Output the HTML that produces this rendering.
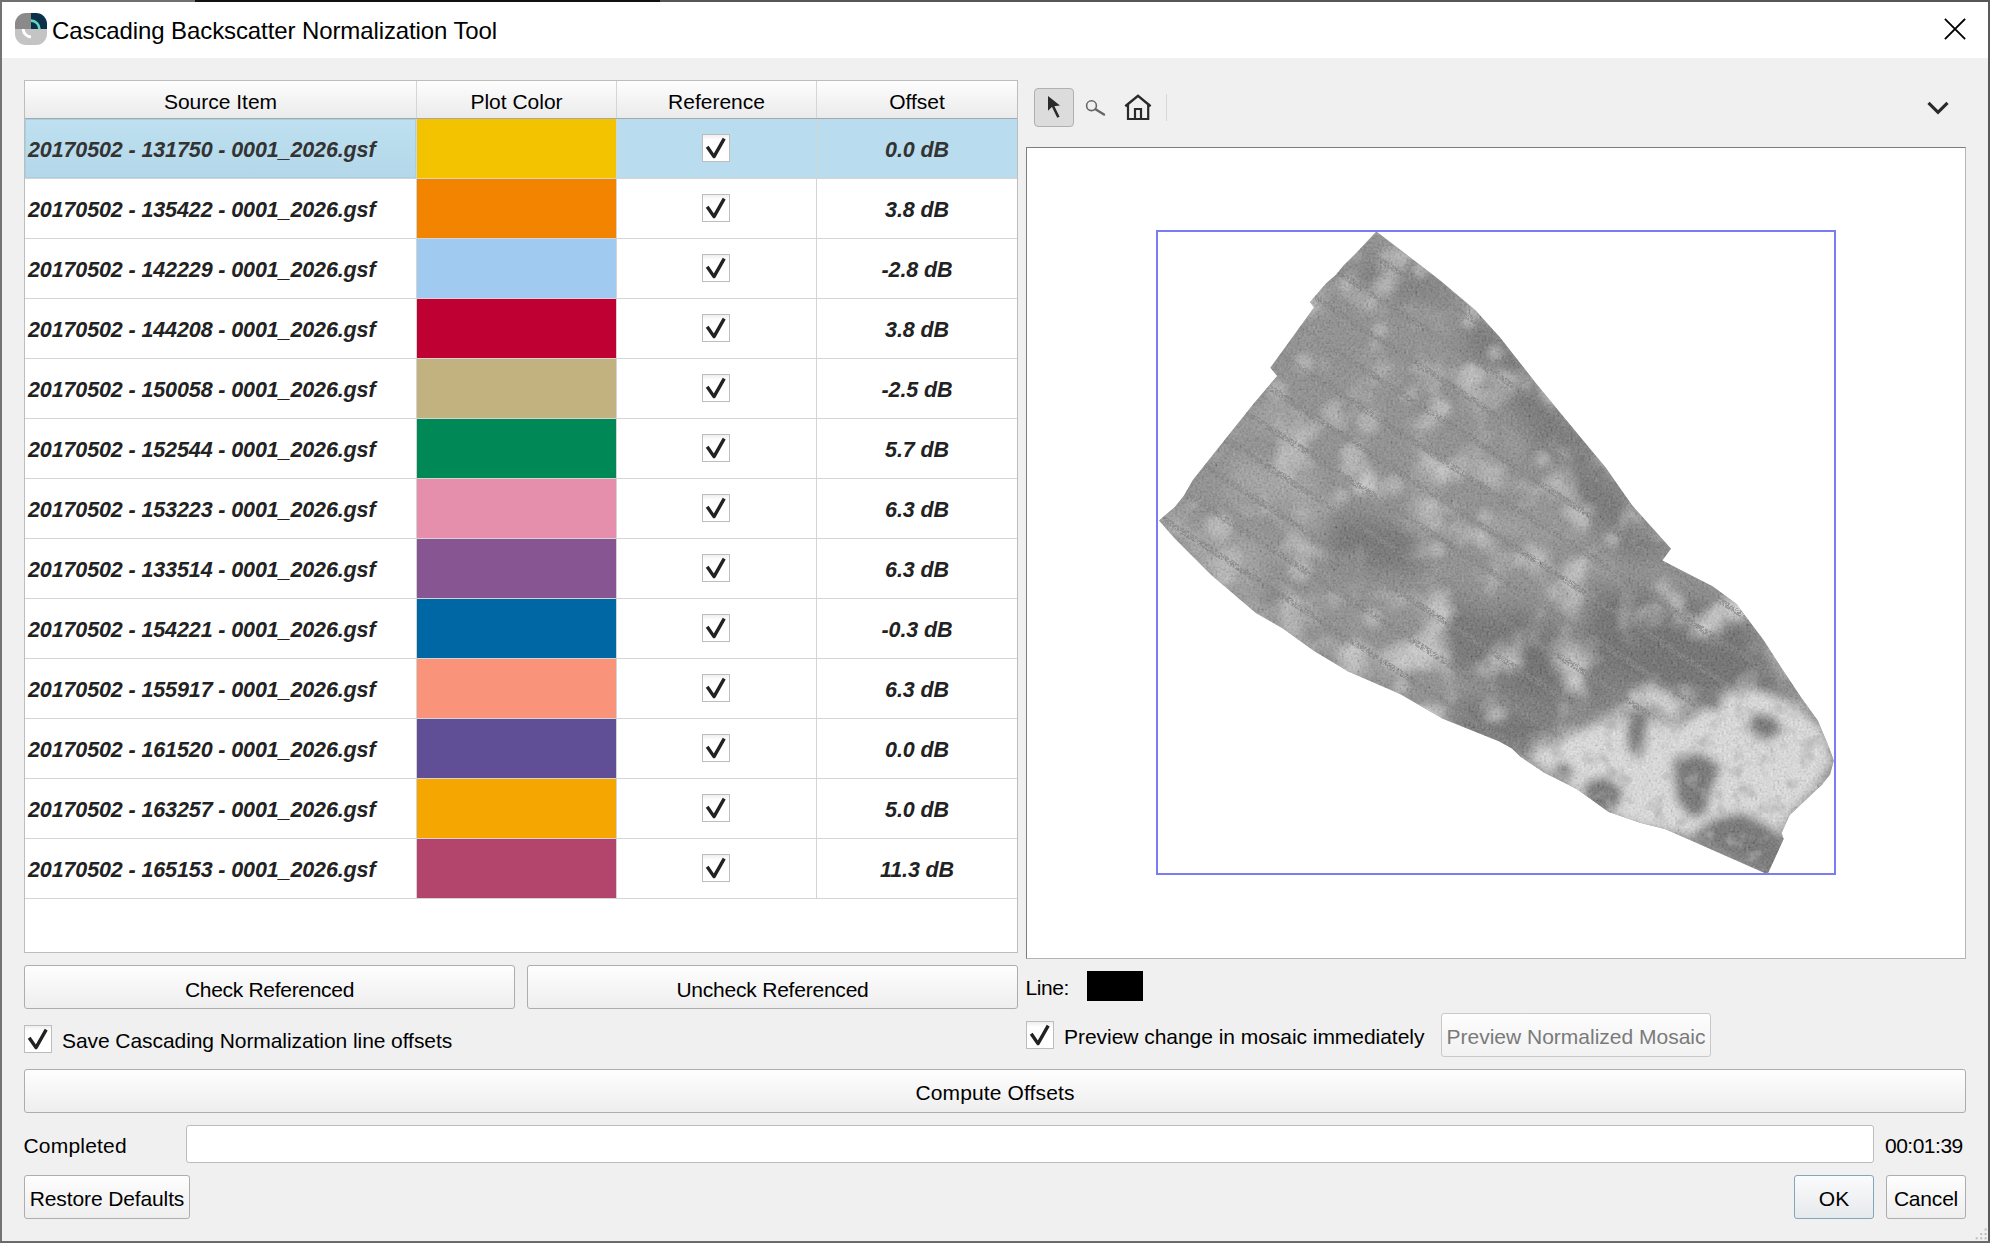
<!DOCTYPE html>
<html><head><meta charset="utf-8"><title>Cascading Backscatter Normalization Tool</title>
<style>
*{box-sizing:border-box;margin:0;padding:0}
html,body{width:1990px;height:1243px;overflow:hidden;background:#f0f0f0;font-family:"Liberation Sans",sans-serif;color:#000;position:relative}
.a{position:absolute}
.tt{font-size:24px;line-height:24px;white-space:nowrap;color:#000}
.txt{font-size:21px;line-height:21px;white-space:nowrap;color:#000}
.ht{font-size:21px;line-height:21px;white-space:nowrap;text-align:center;color:#000}
.rt{font-size:21.5px;letter-spacing:-0.12px;line-height:21px;white-space:nowrap;font-weight:bold;font-style:italic}
.ctr{text-align:center}
.hdr{background:linear-gradient(#fdfdfd,#ebebeb)}
.btn{border:1px solid #adadad;border-radius:3px;background:linear-gradient(#fefefe,#eeeeee)}
.btnd{border:1px solid #c9c9c9;border-radius:3px;background:linear-gradient(#fdfdfd,#f1f1f1)}
.cb{position:absolute;width:28px;height:28px;border:1px solid #bdbdbd;background:linear-gradient(#eeeeee,#fff 5px)}
.cb svg{position:absolute;left:-1px;top:-1px}

</style></head><body>
<div class="a" style="left:0;top:0;width:1990px;height:2px;background:#575757"></div>
<div class="a" style="left:0;top:0;width:195px;height:2px;background:#707070"></div>
<div class="a" style="left:195px;top:0;width:465px;height:2px;background:#111"></div>
<div class="a" style="left:0;top:0;width:2px;height:1243px;background:#737373"></div>
<div class="a" style="left:1988px;top:0;width:2px;height:1243px;background:#5a5a5a"></div>
<div class="a" style="left:0;top:1241px;width:1990px;height:2px;background:#6a6a6a"></div>
<div class="a" style="left:2px;top:2px;width:1986px;height:56px;background:#fff"></div>
<div class="a" style="left:15px;top:13px;width:32px;height:32px">
<svg width="32" height="32" viewBox="0 0 32 32">
<defs><clipPath id="ic"><rect x="0" y="0" width="32" height="32" rx="11" ry="11"/></clipPath></defs>
<g clip-path="url(#ic)">
<rect x="0" y="0" width="16" height="16" fill="#8a8a8a"/>
<rect x="16" y="0" width="16" height="16" fill="#0b3049"/>
<rect x="0" y="16" width="32" height="16" fill="#c4c4c4"/>
<path d="M16 7.6 A8.4 8.4 0 0 1 24.4 16" fill="none" stroke="#62d8bd" stroke-width="2.6"/>
<path d="M8.2 16 A7.8 7.8 0 0 0 16 23.8" fill="none" stroke="#fff" stroke-width="2.8"/>
</g></svg></div>
<div class="a tt" style="left:52px;top:19px;letter-spacing:-0.1px">Cascading Backscatter Normalization Tool</div>
<svg class="a" style="left:1940px;top:14px" width="30" height="30" viewBox="0 0 30 30"><path d="M5.6 5.6 L24.4 24.4 M24.4 5.6 L5.6 24.4" stroke="#000" stroke-width="1.9" stroke-linecap="square"/></svg>

<!-- table -->
<div class="a" style="left:24px;top:80px;width:994px;height:873px;border:1px solid #bdbdbd;background:#fff"></div>
<div class="a hdr" style="left:25px;top:81px;width:992px;height:37px"></div>
<div class="a" style="left:25px;top:118px;width:992px;height:1px;background:#a8a8a8"></div>
<div class="a" style="left:416px;top:81px;width:1px;height:37px;background:#d5d5d5"></div>
<div class="a" style="left:616px;top:81px;width:1px;height:37px;background:#d5d5d5"></div>
<div class="a" style="left:816px;top:81px;width:1px;height:37px;background:#d5d5d5"></div>
<div class="a ht" style="left:25px;width:391px;top:91px">Source Item</div>
<div class="a ht" style="left:417px;width:199px;top:91px">Plot Color</div>
<div class="a ht" style="left:617px;width:199px;top:91px">Reference</div>
<div class="a ht" style="left:817px;width:200px;top:91px">Offset</div>
<div class="a" style="left:25px;top:119px;width:391px;height:59px;background:linear-gradient(#bee0f1,#b4d8e9);border:1px solid #a9cfe2"></div><div class="a" style="left:417px;top:119px;width:199px;height:59px;background:#F3C300"></div><div class="a" style="left:617px;top:119px;width:400px;height:59px;background:#b9dcee"></div><div class="a rt" style="left:28px;top:140px;color:#333">20170502 - 131750 - 0001_2026.gsf</div><div class="a rt ctr" style="left:817px;width:200px;top:140px;color:#333">0.0 dB</div><div class="cb" style="left:702px;top:134px"><svg width="28" height="28" viewBox="0 0 28 28"><path d="M5.2 12.8 L12 22.6 L22.2 4.6" fill="none" stroke="#222" stroke-width="3.4" stroke-linejoin="round"/></svg></div><div class="a" style="left:25px;top:178px;width:992px;height:1px;background:#d4d4d4"></div><div class="a" style="left:25px;top:179px;width:391px;height:59px;background:#ffffff"></div><div class="a" style="left:417px;top:179px;width:199px;height:59px;background:#F38400"></div><div class="a" style="left:617px;top:179px;width:400px;height:59px;background:#ffffff"></div><div class="a rt" style="left:28px;top:200px;color:#222">20170502 - 135422 - 0001_2026.gsf</div><div class="a rt ctr" style="left:817px;width:200px;top:200px;color:#222">3.8 dB</div><div class="cb" style="left:702px;top:194px"><svg width="28" height="28" viewBox="0 0 28 28"><path d="M5.2 12.8 L12 22.6 L22.2 4.6" fill="none" stroke="#222" stroke-width="3.4" stroke-linejoin="round"/></svg></div><div class="a" style="left:25px;top:238px;width:992px;height:1px;background:#d4d4d4"></div><div class="a" style="left:25px;top:239px;width:391px;height:59px;background:#ffffff"></div><div class="a" style="left:417px;top:239px;width:199px;height:59px;background:#A1CAF1"></div><div class="a" style="left:617px;top:239px;width:400px;height:59px;background:#ffffff"></div><div class="a rt" style="left:28px;top:260px;color:#222">20170502 - 142229 - 0001_2026.gsf</div><div class="a rt ctr" style="left:817px;width:200px;top:260px;color:#222">-2.8 dB</div><div class="cb" style="left:702px;top:254px"><svg width="28" height="28" viewBox="0 0 28 28"><path d="M5.2 12.8 L12 22.6 L22.2 4.6" fill="none" stroke="#222" stroke-width="3.4" stroke-linejoin="round"/></svg></div><div class="a" style="left:25px;top:298px;width:992px;height:1px;background:#d4d4d4"></div><div class="a" style="left:25px;top:299px;width:391px;height:59px;background:#ffffff"></div><div class="a" style="left:417px;top:299px;width:199px;height:59px;background:#BE0032"></div><div class="a" style="left:617px;top:299px;width:400px;height:59px;background:#ffffff"></div><div class="a rt" style="left:28px;top:320px;color:#222">20170502 - 144208 - 0001_2026.gsf</div><div class="a rt ctr" style="left:817px;width:200px;top:320px;color:#222">3.8 dB</div><div class="cb" style="left:702px;top:314px"><svg width="28" height="28" viewBox="0 0 28 28"><path d="M5.2 12.8 L12 22.6 L22.2 4.6" fill="none" stroke="#222" stroke-width="3.4" stroke-linejoin="round"/></svg></div><div class="a" style="left:25px;top:358px;width:992px;height:1px;background:#d4d4d4"></div><div class="a" style="left:25px;top:359px;width:391px;height:59px;background:#ffffff"></div><div class="a" style="left:417px;top:359px;width:199px;height:59px;background:#C2B280"></div><div class="a" style="left:617px;top:359px;width:400px;height:59px;background:#ffffff"></div><div class="a rt" style="left:28px;top:380px;color:#222">20170502 - 150058 - 0001_2026.gsf</div><div class="a rt ctr" style="left:817px;width:200px;top:380px;color:#222">-2.5 dB</div><div class="cb" style="left:702px;top:374px"><svg width="28" height="28" viewBox="0 0 28 28"><path d="M5.2 12.8 L12 22.6 L22.2 4.6" fill="none" stroke="#222" stroke-width="3.4" stroke-linejoin="round"/></svg></div><div class="a" style="left:25px;top:418px;width:992px;height:1px;background:#d4d4d4"></div><div class="a" style="left:25px;top:419px;width:391px;height:59px;background:#ffffff"></div><div class="a" style="left:417px;top:419px;width:199px;height:59px;background:#008856"></div><div class="a" style="left:617px;top:419px;width:400px;height:59px;background:#ffffff"></div><div class="a rt" style="left:28px;top:440px;color:#222">20170502 - 152544 - 0001_2026.gsf</div><div class="a rt ctr" style="left:817px;width:200px;top:440px;color:#222">5.7 dB</div><div class="cb" style="left:702px;top:434px"><svg width="28" height="28" viewBox="0 0 28 28"><path d="M5.2 12.8 L12 22.6 L22.2 4.6" fill="none" stroke="#222" stroke-width="3.4" stroke-linejoin="round"/></svg></div><div class="a" style="left:25px;top:478px;width:992px;height:1px;background:#d4d4d4"></div><div class="a" style="left:25px;top:479px;width:391px;height:59px;background:#ffffff"></div><div class="a" style="left:417px;top:479px;width:199px;height:59px;background:#E68FAC"></div><div class="a" style="left:617px;top:479px;width:400px;height:59px;background:#ffffff"></div><div class="a rt" style="left:28px;top:500px;color:#222">20170502 - 153223 - 0001_2026.gsf</div><div class="a rt ctr" style="left:817px;width:200px;top:500px;color:#222">6.3 dB</div><div class="cb" style="left:702px;top:494px"><svg width="28" height="28" viewBox="0 0 28 28"><path d="M5.2 12.8 L12 22.6 L22.2 4.6" fill="none" stroke="#222" stroke-width="3.4" stroke-linejoin="round"/></svg></div><div class="a" style="left:25px;top:538px;width:992px;height:1px;background:#d4d4d4"></div><div class="a" style="left:25px;top:539px;width:391px;height:59px;background:#ffffff"></div><div class="a" style="left:417px;top:539px;width:199px;height:59px;background:#875692"></div><div class="a" style="left:617px;top:539px;width:400px;height:59px;background:#ffffff"></div><div class="a rt" style="left:28px;top:560px;color:#222">20170502 - 133514 - 0001_2026.gsf</div><div class="a rt ctr" style="left:817px;width:200px;top:560px;color:#222">6.3 dB</div><div class="cb" style="left:702px;top:554px"><svg width="28" height="28" viewBox="0 0 28 28"><path d="M5.2 12.8 L12 22.6 L22.2 4.6" fill="none" stroke="#222" stroke-width="3.4" stroke-linejoin="round"/></svg></div><div class="a" style="left:25px;top:598px;width:992px;height:1px;background:#d4d4d4"></div><div class="a" style="left:25px;top:599px;width:391px;height:59px;background:#ffffff"></div><div class="a" style="left:417px;top:599px;width:199px;height:59px;background:#0067A5"></div><div class="a" style="left:617px;top:599px;width:400px;height:59px;background:#ffffff"></div><div class="a rt" style="left:28px;top:620px;color:#222">20170502 - 154221 - 0001_2026.gsf</div><div class="a rt ctr" style="left:817px;width:200px;top:620px;color:#222">-0.3 dB</div><div class="cb" style="left:702px;top:614px"><svg width="28" height="28" viewBox="0 0 28 28"><path d="M5.2 12.8 L12 22.6 L22.2 4.6" fill="none" stroke="#222" stroke-width="3.4" stroke-linejoin="round"/></svg></div><div class="a" style="left:25px;top:658px;width:992px;height:1px;background:#d4d4d4"></div><div class="a" style="left:25px;top:659px;width:391px;height:59px;background:#ffffff"></div><div class="a" style="left:417px;top:659px;width:199px;height:59px;background:#F99379"></div><div class="a" style="left:617px;top:659px;width:400px;height:59px;background:#ffffff"></div><div class="a rt" style="left:28px;top:680px;color:#222">20170502 - 155917 - 0001_2026.gsf</div><div class="a rt ctr" style="left:817px;width:200px;top:680px;color:#222">6.3 dB</div><div class="cb" style="left:702px;top:674px"><svg width="28" height="28" viewBox="0 0 28 28"><path d="M5.2 12.8 L12 22.6 L22.2 4.6" fill="none" stroke="#222" stroke-width="3.4" stroke-linejoin="round"/></svg></div><div class="a" style="left:25px;top:718px;width:992px;height:1px;background:#d4d4d4"></div><div class="a" style="left:25px;top:719px;width:391px;height:59px;background:#ffffff"></div><div class="a" style="left:417px;top:719px;width:199px;height:59px;background:#604E97"></div><div class="a" style="left:617px;top:719px;width:400px;height:59px;background:#ffffff"></div><div class="a rt" style="left:28px;top:740px;color:#222">20170502 - 161520 - 0001_2026.gsf</div><div class="a rt ctr" style="left:817px;width:200px;top:740px;color:#222">0.0 dB</div><div class="cb" style="left:702px;top:734px"><svg width="28" height="28" viewBox="0 0 28 28"><path d="M5.2 12.8 L12 22.6 L22.2 4.6" fill="none" stroke="#222" stroke-width="3.4" stroke-linejoin="round"/></svg></div><div class="a" style="left:25px;top:778px;width:992px;height:1px;background:#d4d4d4"></div><div class="a" style="left:25px;top:779px;width:391px;height:59px;background:#ffffff"></div><div class="a" style="left:417px;top:779px;width:199px;height:59px;background:#F6A600"></div><div class="a" style="left:617px;top:779px;width:400px;height:59px;background:#ffffff"></div><div class="a rt" style="left:28px;top:800px;color:#222">20170502 - 163257 - 0001_2026.gsf</div><div class="a rt ctr" style="left:817px;width:200px;top:800px;color:#222">5.0 dB</div><div class="cb" style="left:702px;top:794px"><svg width="28" height="28" viewBox="0 0 28 28"><path d="M5.2 12.8 L12 22.6 L22.2 4.6" fill="none" stroke="#222" stroke-width="3.4" stroke-linejoin="round"/></svg></div><div class="a" style="left:25px;top:838px;width:992px;height:1px;background:#d4d4d4"></div><div class="a" style="left:25px;top:839px;width:391px;height:59px;background:#ffffff"></div><div class="a" style="left:417px;top:839px;width:199px;height:59px;background:#B3446C"></div><div class="a" style="left:617px;top:839px;width:400px;height:59px;background:#ffffff"></div><div class="a rt" style="left:28px;top:860px;color:#222">20170502 - 165153 - 0001_2026.gsf</div><div class="a rt ctr" style="left:817px;width:200px;top:860px;color:#222">11.3 dB</div><div class="cb" style="left:702px;top:854px"><svg width="28" height="28" viewBox="0 0 28 28"><path d="M5.2 12.8 L12 22.6 L22.2 4.6" fill="none" stroke="#222" stroke-width="3.4" stroke-linejoin="round"/></svg></div><div class="a" style="left:25px;top:898px;width:992px;height:1px;background:#d4d4d4"></div>
<div class="a" style="left:416px;top:119px;width:1px;height:780px;background:#d4d4d4"></div>
<div class="a" style="left:616px;top:119px;width:1px;height:780px;background:#d4d4d4"></div>
<div class="a" style="left:816px;top:119px;width:1px;height:780px;background:#d4d4d4"></div>

<!-- buttons under table -->
<div class="a btn" style="left:24px;top:965px;width:491px;height:44px"></div>
<div class="a txt ctr" style="left:24px;width:491px;top:979px;letter-spacing:-0.3px">Check Referenced</div>
<div class="a btn" style="left:527px;top:965px;width:491px;height:44px"></div>
<div class="a txt ctr" style="left:527px;width:491px;top:979px;letter-spacing:-0.22px">Uncheck Referenced</div>
<div class="cb" style="left:24px;top:1025px"><svg width="28" height="28" viewBox="0 0 28 28"><path d="M5.2 12.8 L12 22.6 L22.2 4.6" fill="none" stroke="#222" stroke-width="3.4" stroke-linejoin="round"/></svg></div>
<div class="a txt" style="left:62px;top:1030px;letter-spacing:-0.07px">Save Cascading Normalization line offsets</div>

<!-- right panel -->
<div class="a" style="left:1034px;top:88px;width:40px;height:39px;background:#dcdcdc;border:1px solid #b0b0b0;border-radius:4px"></div>
<svg class="a" style="left:1030px;top:84px" width="150" height="48" viewBox="1030 84 150 48">
<path d="M1048 96 L1048 110.8 L1052.4 106.6 L1055.8 105.9 L1060 105.6 Z" fill="#2a2a2a"/>
<path d="M1052.8 105.8 L1058.4 117.2" stroke="#2a2a2a" stroke-width="2.6"/>
<circle cx="1091.5" cy="105.7" r="4.9" fill="none" stroke="#666" stroke-width="1.6"/>
<path d="M1095.5 109.2 L1104 114.5" stroke="#666" stroke-width="2.4" stroke-linecap="round"/>
<path d="M1125.3 106.2 L1138 95.8 L1150.6 106.2" fill="none" stroke="#2a2a2a" stroke-width="2.4"/>
<path d="M1128 103.5 L1128 119 L1148.2 119 L1148.2 103.5 M1135 119 L1135 109 L1141 109 L1141 119" fill="none" stroke="#2a2a2a" stroke-width="2.2"/>
<rect x="1166" y="94" width="1" height="27" fill="#d8d8d8"/>
</svg>
<svg class="a" style="left:1920px;top:96px" width="36" height="24" viewBox="1920 96 36 24"><path d="M1928.5 102.8 L1938 112.3 L1947.5 102.8" fill="none" stroke="#2a2a2a" stroke-width="3.2"/></svg>

<div class="a" style="left:1026px;top:147px;width:940px;height:812px;background:#fff;border-top:1px solid #7d7d7d;border-left:1px solid #7d7d7d;border-right:1px solid #b4b4b4;border-bottom:1px solid #b4b4b4"></div>
<svg class="a" style="left:0;top:0" width="1990" height="1243" viewBox="0 0 1990 1243">
<defs>
<clipPath id="mc"><polygon points="1376.4,231.5 1439.9,280.2 1475.4,310.2 1500,337.6 1536.3,383.7 1562.4,415.6 1605.8,467.7 1632,505.3 1671,548.8 1662.3,560.4 1713,586.4 1736.2,603.8 1763.5,640 1781.6,668.2 1801.7,698.3 1817.8,720.4 1827.9,744.6 1833.9,760.7 1830,774.7 1821.9,784.8 1789.7,815 1781.6,833 1783.6,839 1767.5,874.3 1665,829 1640.9,823 1608.7,812 1576.5,788.8 1544.3,772.7 1520.2,756.6 1512,748.6 1499,741.3 1442.8,718.7 1400,694 1348.2,671.4 1314.4,651.2 1282.9,628.6 1255.9,612.9 1240,599.4 1210.8,574.6 1192.8,556.6 1174.8,538.6 1159,520.5 1174.8,507 1183.8,495.8 1192.8,480 1254,403.2 1277.2,375.9 1270.3,367.7 1314,307.5 1310,302 1326.4,282.9 1336,274.7 1344,265 1355,254.2"/></clipPath>
<filter id="bl" x="-30%" y="-30%" width="160%" height="160%"><feGaussianBlur stdDeviation="10"/></filter>
<filter id="bl2" x="-30%" y="-30%" width="160%" height="160%"><feGaussianBlur stdDeviation="3"/></filter>
<filter id="cl" x="0" y="0" width="100%" height="100%"><feTurbulence type="fractalNoise" baseFrequency="0.022" numOctaves="3" seed="11"/><feColorMatrix type="matrix" values="0 0 0 0 0.74 0 0 0 0 0.74 0 0 0 0 0.74 1.3 1.3 1.3 0 -1.95"/><feGaussianBlur stdDeviation="2"/></filter>
<filter id="dk" x="0" y="0" width="100%" height="100%"><feTurbulence type="fractalNoise" baseFrequency="0.02" numOctaves="2" seed="29"/><feColorMatrix type="matrix" values="0 0 0 0 0.38 0 0 0 0 0.38 0 0 0 0 0.38 -1.8 -1.8 -1.8 0 2.55"/></filter>
<filter id="nz" x="0" y="0" width="100%" height="100%"><feTurbulence type="fractalNoise" baseFrequency="0.45" numOctaves="1" seed="5"/><feColorMatrix type="matrix" values="0.33 0.33 0.33 0 0 0.33 0.33 0.33 0 0 0.33 0.33 0.33 0 0 0 0 0 0 1"/><feComponentTransfer><feFuncR type="linear" slope="2.4" intercept="-0.7"/><feFuncG type="linear" slope="2.4" intercept="-0.7"/><feFuncB type="linear" slope="2.4" intercept="-0.7"/></feComponentTransfer></filter>
<filter id="bl3" x="-30%" y="-30%" width="160%" height="160%"><feGaussianBlur stdDeviation="5"/></filter>
</defs>
<rect x="1157" y="231" width="678" height="643" fill="none" stroke="#7b7bf3" stroke-width="2"/>
<g clip-path="url(#mc)">
<rect x="1150" y="225" width="690" height="655" fill="#888888"/>
<rect x="1150" y="225" width="690" height="655" filter="url(#dk)" opacity="0.6"/>
<g filter="url(#bl)">
<polygon points="1475,308 1547.5,390.6 1669.5,549 1633,562 1580,509 1514.5,417 1462,338" fill="#555" opacity="0.55"/>
<polygon points="1350,259 1420,262 1462,305 1400,300 1340,290" fill="#555" opacity="0.35"/>
<polygon points="1330,510 1420,530 1420,575 1330,565" fill="#555" opacity="0.6"/>
<polygon points="1429,595 1540,625 1560,690 1520,705 1425,650" fill="#555" opacity="0.6"/>
<polygon points="1462,690 1560,725 1545,765 1455,730" fill="#555" opacity="0.65"/>
<polygon points="1600,585 1700,600 1745,620 1790,690 1750,700 1640,690 1580,640" fill="#555" opacity="0.7"/>
<polygon points="1500,600 1600,640 1640,710 1540,720" fill="#555" opacity="0.5"/>
<polygon points="1250,560 1290,600 1320,640 1260,610" fill="#555" opacity="0.3"/>
<polygon points="1231,457 1317,470 1317,509 1231,500" fill="#bbb" opacity="0.45"/>
<polygon points="1185,523 1264,540 1264,602 1200,580" fill="#bbb" opacity="0.4"/>
</g>
<rect x="1150" y="225" width="690" height="655" filter="url(#cl)" opacity="1"/>
<g filter="url(#bl2)">
<circle cx="1304" cy="363" r="10" fill="#b8b8b8" opacity="0.75"/>
<circle cx="1277" cy="390" r="10" fill="#b8b8b8" opacity="0.75"/>
<circle cx="1368" cy="422" r="12" fill="#b8b8b8" opacity="0.75"/>
<circle cx="1352" cy="454" r="12" fill="#b8b8b8" opacity="0.75"/>
<circle cx="1469" cy="374" r="10" fill="#b8b8b8" opacity="0.75"/>
<circle cx="1469" cy="321" r="8" fill="#b8b8b8" opacity="0.75"/>
<circle cx="1495" cy="353" r="8" fill="#b8b8b8" opacity="0.75"/>
<circle cx="1426" cy="422" r="8" fill="#b8b8b8" opacity="0.75"/>
<circle cx="1394" cy="485" r="10" fill="#b8b8b8" opacity="0.75"/>
<circle cx="1341" cy="496" r="8" fill="#b8b8b8" opacity="0.75"/>
<circle cx="1485" cy="517" r="8" fill="#b8b8b8" opacity="0.75"/>
<circle cx="1437" cy="549" r="8" fill="#b8b8b8" opacity="0.75"/>
<circle cx="1543" cy="459" r="8" fill="#b8b8b8" opacity="0.75"/>
<circle cx="1612" cy="539" r="8" fill="#b8b8b8" opacity="0.75"/>
<circle cx="1554" cy="592" r="8" fill="#b8b8b8" opacity="0.75"/>
<circle cx="1219" cy="528" r="12" fill="#b8b8b8" opacity="0.75"/>
<circle cx="1437" cy="597" r="8" fill="#b8b8b8" opacity="0.75"/>
<circle cx="1676" cy="602" r="8" fill="#b8b8b8" opacity="0.75"/>
<circle cx="1373" cy="618" r="10" fill="#b8b8b8" opacity="0.75"/>
<circle cx="1400" cy="687" r="8" fill="#b8b8b8" opacity="0.75"/>
<circle cx="1300" cy="570" r="12" fill="#b8b8b8" opacity="0.75"/>
<circle cx="1230" cy="560" r="12" fill="#b8b8b8" opacity="0.75"/>
<circle cx="1380" cy="330" r="8" fill="#b8b8b8" opacity="0.75"/>
<circle cx="1420" cy="270" r="8" fill="#b8b8b8" opacity="0.75"/>
<circle cx="1520" cy="560" r="8" fill="#b8b8b8" opacity="0.75"/>
</g>
<mask id="sm" maskUnits="userSpaceOnUse" x="1150" y="225" width="690" height="655"><path d="M1150 -170.0 L1850 285.0 M1150 -130.0 L1850 325.0 M1150 -90.0 L1850 365.0 M1150 -50.0 L1850 405.0 M1150 -10.0 L1850 445.0 M1150 30.0 L1850 485.0 M1150 70.0 L1850 525.0 M1150 110.0 L1850 565.0 M1150 150.0 L1850 605.0 M1150 190.0 L1850 645.0 M1150 230.0 L1850 685.0 M1150 270.0 L1850 725.0 M1150 310.0 L1850 765.0 M1150 350.0 L1850 805.0 M1150 390.0 L1850 845.0 M1150 430.0 L1850 885.0 M1150 470.0 L1850 925.0 M1150 510.0 L1850 965.0 M1150 550.0 L1850 1005.0 M1150 590.0 L1850 1045.0 M1150 630.0 L1850 1085.0 M1150 670.0 L1850 1125.0 M1150 710.0 L1850 1165.0 M1150 750.0 L1850 1205.0 M1150 790.0 L1850 1245.0 M1150 830.0 L1850 1285.0 M1150 870.0 L1850 1325.0 M1150 910.0 L1850 1365.0" stroke="#fff" stroke-width="6" fill="none"/></mask>
<filter id="sp" x="0" y="0" width="100%" height="100%"><feTurbulence type="turbulence" baseFrequency="0.4" numOctaves="1" seed="3"/><feColorMatrix type="matrix" values="0 0 0 0 0.2 0 0 0 0 0.2 0 0 0 0 0.2 9 0 0 0 -0.5"/></filter>
<rect x="1150" y="225" width="690" height="655" filter="url(#sp)" mask="url(#sm)" opacity="0.75"/>
<g filter="url(#bl3)"><polygon points="1527,756 1570,735 1600,722 1640,715 1680,726 1700,712 1720,695 1760,690 1795,705 1822,730 1832,762 1815,785 1788,814 1779,836.5 1777,873.6 1680,832 1635,825 1601,809.5 1567.6,784.7 1545,771" fill="#e0e0e0"/>
<polygon points="1632,712 1650,718 1646,735 1642,757 1628,752 1626,728" fill="#6a6a6a"/>
<polygon points="1672,758 1700,752 1722,766 1712,790 1706,815 1690,818 1676,800" fill="#6a6a6a"/>
<polygon points="1584,782 1606,776 1624,790 1618,808 1600,812 1584,796" fill="#6a6a6a"/>
<polygon points="1690,835 1715,818 1742,812 1770,826 1785,840 1779,876 1740,860" fill="#6a6a6a"/>
<polygon points="1752,712 1775,716 1784,732 1764,742 1748,730" fill="#6a6a6a"/>
<polygon points="1700,690 1725,700 1718,712 1698,706" fill="#6a6a6a"/>
<polygon points="1560,760 1575,770 1568,782 1552,772" fill="#6a6a6a"/>
</g>
<clipPath id="lc"><polygon points="1527,756 1570,735 1600,722 1640,715 1680,726 1700,712 1720,695 1760,690 1795,705 1822,730 1832,762 1815,785 1788,814 1779,836.5 1777,873.6 1680,832 1635,825 1601,809.5 1567.6,784.7 1545,771"/></clipPath>
<rect x="1150" y="225" width="690" height="655" filter="url(#nz)" opacity="0.22"/>
<filter id="lz" x="0" y="0" width="100%" height="100%"><feTurbulence type="fractalNoise" baseFrequency="0.06" numOctaves="3" seed="41"/><feColorMatrix type="matrix" values="0 0 0 0 0.42 0 0 0 0 0.42 0 0 0 0 0.42 -3 0 0 0 1.45"/></filter>
<rect x="1500" y="640" width="340" height="240" filter="url(#lz)" clip-path="url(#lc)" opacity="0.7"/>
</g></svg>

<div class="a txt" style="left:1025.5px;top:977px;letter-spacing:-0.4px">Line:</div>
<div class="a" style="left:1087px;top:971px;width:56px;height:30px;background:#000"></div>
<div class="cb" style="left:1026px;top:1021px"><svg width="28" height="28" viewBox="0 0 28 28"><path d="M5.2 12.8 L12 22.6 L22.2 4.6" fill="none" stroke="#222" stroke-width="3.4" stroke-linejoin="round"/></svg></div>
<div class="a txt" style="left:1064px;top:1026px;letter-spacing:-0.04px">Preview change in mosaic immediately</div>
<div class="a btnd" style="left:1441px;top:1013px;width:270px;height:44px"></div>
<div class="a txt ctr" style="left:1441px;width:270px;top:1026px;color:#7a7a7a">Preview Normalized Mosaic</div>

<!-- bottom -->
<div class="a btn" style="left:24px;top:1069px;width:1942px;height:44px"></div>
<div class="a txt ctr" style="left:24px;width:1942px;top:1082px;letter-spacing:0.13px">Compute Offsets</div>
<div class="a txt" style="left:23.5px;top:1135px;letter-spacing:0.2px">Completed</div>
<div class="a" style="left:186px;top:1125px;width:1688px;height:38px;background:#fff;border:1px solid #bcbcbc;border-radius:3px"></div>
<div class="a txt" style="left:1885px;top:1135px;letter-spacing:-0.5px">00:01:39</div>
<div class="a btn" style="left:24px;top:1175px;width:166px;height:44px"></div>
<div class="a txt ctr" style="left:24px;width:166px;top:1188px;letter-spacing:-0.12px">Restore Defaults</div>
<div class="a btn" style="left:1794px;top:1175px;width:80px;height:44px;border-color:#7fa7be;background:linear-gradient(#fafbfc,#e6e9ec)"></div>
<div class="a txt ctr" style="left:1794px;width:80px;top:1188px">OK</div>
<div class="a btn" style="left:1886px;top:1175px;width:80px;height:44px"></div>
<div class="a txt ctr" style="left:1886px;width:80px;top:1188px;letter-spacing:-0.2px">Cancel</div>
<svg class="a" style="left:1970px;top:1224px" width="20" height="19"><g fill="#bdbdbd"><rect x="14.6" y="4.5" width="2" height="2"/><rect x="14.6" y="9" width="2" height="2"/><rect x="10.2" y="9" width="2" height="2"/><rect x="14.6" y="13.3" width="2" height="2"/><rect x="10.2" y="13.3" width="2" height="2"/><rect x="5.7" y="13.3" width="2" height="2"/></g></svg>
</body></html>
